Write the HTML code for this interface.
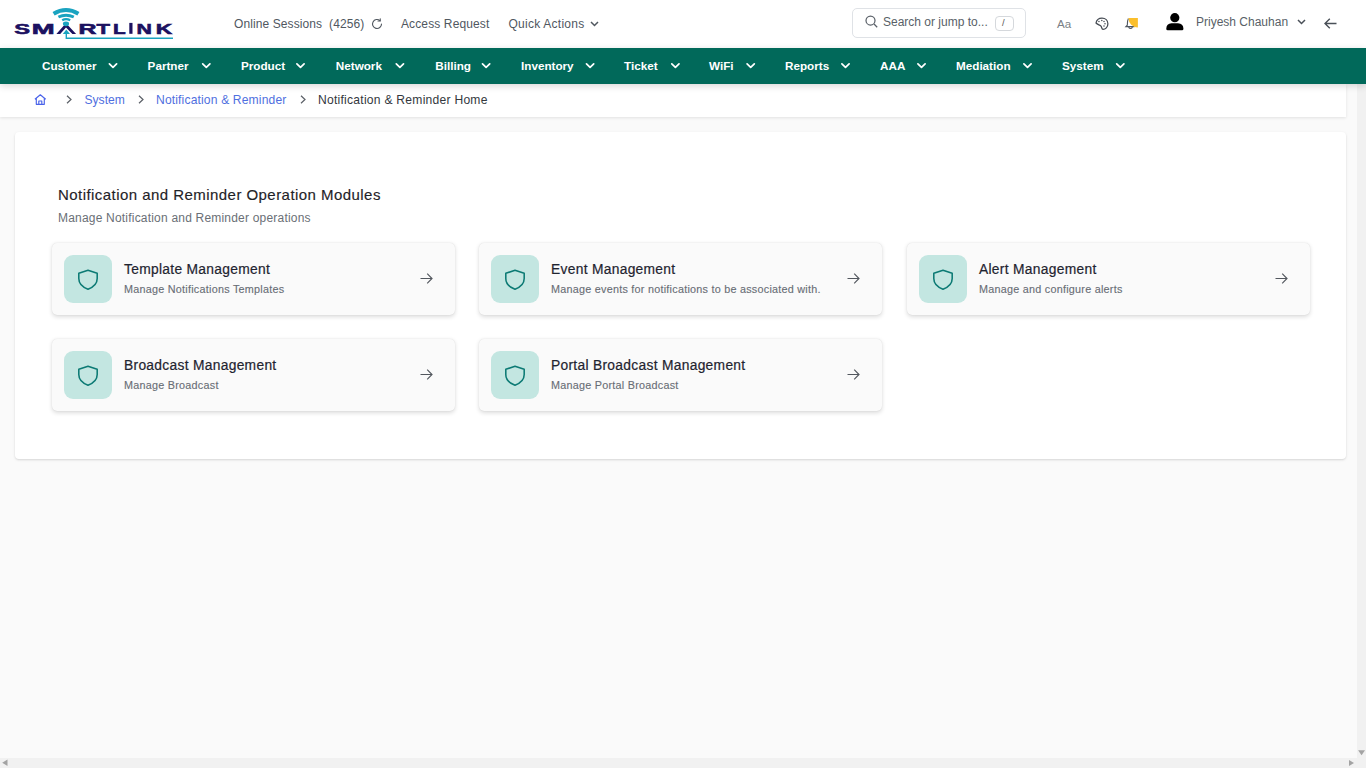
<!DOCTYPE html>
<html><head><meta charset="utf-8">
<style>
*{box-sizing:border-box;margin:0;padding:0}
html,body{width:1366px;height:768px;overflow:hidden;background:#fafafa;font-family:"Liberation Sans",sans-serif}
.a{position:absolute;white-space:nowrap;line-height:20px}
svg{position:absolute;overflow:visible}
#hdr{position:absolute;left:0;top:0;width:1366px;height:48px;background:#fff}
#nav{position:absolute;left:0;top:48px;width:1366px;height:36px;background:#01695a;box-shadow:0 2px 7px rgba(0,0,0,.16);z-index:3}
.hl{font-size:12px;color:#50575f;top:14px}
.nv{font-size:11.7px;font-weight:700;color:#fff;top:8px}
#bc{position:absolute;left:0;top:84px;width:1346px;height:33px;background:#fff;box-shadow:0 1px 3px rgba(0,0,0,.10)}
.bcl{font-size:12.1px;color:#4f6fe0;top:6px}
#panel{position:absolute;left:15px;top:132px;width:1331px;height:327px;background:#fff;border-radius:4px;box-shadow:0 1px 3px rgba(0,0,0,.10),0 1px 2px rgba(0,0,0,.06)}
.card{position:absolute;width:403px;height:72px;background:#fafafa;border-radius:5px;box-shadow:0 1.5px 4px rgba(0,0,0,.14),0 0 1px rgba(0,0,0,.12)}
.ib{position:absolute;left:12px;top:12px;width:48px;height:48px;border-radius:9px;background:#c3e6e1}
.ct{position:absolute;left:72px;top:17px;font-size:13.8px;color:#1f2430;letter-spacing:.3px;-webkit-text-stroke:.2px #1f2430}
.cs{position:absolute;left:72px;top:35.5px;font-size:10.8px;color:#686d75;letter-spacing:.25px;-webkit-text-stroke:.12px #686d75}
#vs{position:absolute;left:1357px;top:84px;width:9px;height:684px;background:#f1f1f1}
#hs{position:absolute;left:0;top:758px;width:1366px;height:10px;background:#f1f1f1}
</style></head><body>
<div id="hdr">
  <!-- logo -->
  <svg width="180" height="48" style="left:0;top:0">
    <g fill="#1c1160" stroke="#1c1160" stroke-width="0.6" font-family="Liberation Sans" font-weight="700" font-size="15.3">
      <text x="14.3" y="33.7" textLength="15.8" lengthAdjust="spacingAndGlyphs">S</text>
      <text x="31.7" y="33.7" textLength="22.9" lengthAdjust="spacingAndGlyphs">M</text>
      <text x="78.5" y="33.7" textLength="18" lengthAdjust="spacingAndGlyphs">R</text>
      <text x="96.5" y="33.7" textLength="13.5" lengthAdjust="spacingAndGlyphs">T</text>
      <text x="113" y="33.7" textLength="12.7" lengthAdjust="spacingAndGlyphs">L</text>
      <rect x="129.3" y="22.9" width="3.2" height="10.9" stroke="none"/>
      <text x="136.5" y="33.7" textLength="15.4" lengthAdjust="spacingAndGlyphs">N</text>
      <text x="155.7" y="33.7" textLength="16.5" lengthAdjust="spacingAndGlyphs">K</text>
    </g>
    <path d="M56.4 34 L64.3 25 L67.7 25 L76.1 34 L72.4 34 L66 27.6 L60.2 34 Z" fill="#1c1160"/>
    <ellipse cx="66" cy="23.8" rx="3.1" ry="2.4" fill="#1aa3c0"/>
    <path d="M62.8 33.9 L66.3 29.4 L70 33.9 Z" fill="#1aa3c0"/>
    <path d="M66.3 33 V38.2 H173" stroke="#1aa3c0" stroke-width="1.4" fill="none"/>
    <g stroke="#1aa3c0" fill="none" stroke-linecap="butt">
      <path d="M53.6 13.8 Q66 6.2 78.4 13.8" stroke-width="4"/>
      <path d="M58.4 17 Q66 13.4 73.8 17" stroke-width="3"/>
      <path d="M62.2 20.2 Q66 17.9 70.2 20.2" stroke-width="2.3"/>
    </g>
  </svg>
  <div class="a hl" style="left:234px;letter-spacing:.1px">Online Sessions&nbsp; (4256)</div>
  <svg width="12" height="12" style="left:371px;top:18px" viewBox="0 0 24 24" fill="none" stroke="#50575f" stroke-width="2.2" stroke-linecap="round"><path d="M21 12a9 9 0 1 1-3-6.7"/><path d="M18.5 1.5v4.5h-4.5"/></svg>
  <div class="a hl" style="left:401px;letter-spacing:.12px">Access Request</div>
  <div class="a hl" style="left:508.5px;letter-spacing:.25px">Quick Actions</div>
  <svg width="9" height="6" style="left:590px;top:21px" viewBox="0 0 9 6" fill="none" stroke="#50575f" stroke-width="1.5"><path d="M1 1l3.5 3.5L8 1"/></svg>

  <div style="position:absolute;left:852px;top:8px;width:174px;height:30px;border:1px solid #dfe2e6;border-radius:5px"></div>
  <svg width="13" height="13" style="left:864.5px;top:14.5px" viewBox="0 0 13 13" fill="none" stroke="#5a6068" stroke-width="1.25"><circle cx="5.5" cy="5.5" r="4.5"/><path d="M9 9l3.2 3.2"/></svg>
  <div class="a" style="left:883px;top:12px;font-size:12px;color:#595f67">Search or jump to...</div>
  <div style="position:absolute;left:994.5px;top:15.5px;width:19px;height:15px;border:1px solid #d5d8dc;border-radius:4px"></div>
  <div class="a" style="left:1002px;top:13px;font-size:9.5px;color:#555">/</div>

  <div class="a" style="left:1057px;top:14px;font-size:11.6px;color:#7a7f85">Aa</div>
  <svg width="14" height="14" style="left:1094.5px;top:17px" viewBox="0 0 14 14" fill="none" stroke="#454b53" stroke-width="1.25" stroke-linejoin="round"><path d="M1 6C1.6 2.8 4 1 7 1C10.4 1 12.9 3.4 12.9 6.8C12.9 10.2 10.4 12.4 8 12.4C6.6 12.4 6.9 10.4 6 9.2C5 7.9 2.6 7.8 1 6Z"/><g fill="#454b53" stroke="none"><circle cx="3.95" cy="4.5" r=".75"/><circle cx="6.8" cy="3.5" r=".75"/><circle cx="9" cy="4.5" r=".75"/><circle cx="10" cy="6.7" r=".75"/><circle cx="9" cy="9.1" r=".75"/></g></svg>
  <svg width="14" height="14" style="left:1125px;top:17px" viewBox="0 0 14 14"><path d="M3.4 1.6C2.6 3 2.3 5.5 2.3 8.2L0.9 9.6H9.5M3.6 10.3Q5.5 12.6 7.5 10.3" fill="none" stroke="#50575f" stroke-width="1.1"/><path d="M12.9 1H3.5A9.4 9.4 0 0 0 12.9 10.4Z" fill="#fbbf2c"/></svg>

  <svg width="18" height="18" style="left:1166px;top:13px" viewBox="0 0 18 18" fill="#000"><circle cx="8.8" cy="4.7" r="4.6"/><path d="M0.3 15.5 Q0.5 10.5 5.5 10.3 H12 Q17.2 10.5 17.4 15.5 V16 Q17.4 17.3 16 17.3 H1.7 Q0.3 17.3 0.3 16Z"/></svg>
  <div class="a" style="left:1196px;top:12px;font-size:12px;color:#595f67">Priyesh Chauhan</div>
  <svg width="9" height="6" style="left:1296.5px;top:19px" viewBox="0 0 9 6" fill="none" stroke="#4a5058" stroke-width="1.5"><path d="M1 1l3.5 3.5L8 1"/></svg>
  <svg width="13" height="11" style="left:1324px;top:18px" viewBox="0 0 13 11" fill="none" stroke="#4a5058" stroke-width="1.4"><path d="M12.5 5.5H1M5.8 0.7L1 5.5l4.8 4.8"/></svg>
</div>

<div id="nav">
  <div class="a nv" style="left:42px">Customer</div>
  <div class="a nv" style="left:147.6px">Partner</div>
  <div class="a nv" style="left:241px">Product</div>
  <div class="a nv" style="left:335.8px">Network</div>
  <div class="a nv" style="left:435.3px">Billing</div>
  <div class="a nv" style="left:521px">Inventory</div>
  <div class="a nv" style="left:624px">Ticket</div>
  <div class="a nv" style="left:709px">WiFi</div>
  <div class="a nv" style="left:785px">Reports</div>
  <div class="a nv" style="left:880px">AAA</div>
  <div class="a nv" style="left:956px">Mediation</div>
  <div class="a nv" style="left:1062px">System</div>
  <svg width="1366" height="36" style="left:0;top:0" fill="none" stroke="#fff" stroke-width="1.7" stroke-linecap="round" stroke-linejoin="round"><path transform="translate(0,0.6)" d="M109.4 15.2l3.6 3.6 3.6-3.6M202.7 15.2l3.6 3.6 3.6-3.6M296.9 15.2l3.6 3.6 3.6-3.6M396.3 15.2l3.6 3.6 3.6-3.6M482.5 15.2l3.6 3.6 3.6-3.6M586.5 15.2l3.6 3.6 3.6-3.6M671.8 15.2l3.6 3.6 3.6-3.6M747.1 15.2l3.6 3.6 3.6-3.6M841.9 15.2l3.6 3.6 3.6-3.6M917.9 15.2l3.6 3.6 3.6-3.6M1023.9 15.2l3.6 3.6 3.6-3.6M1116.7 15.2l3.6 3.6 3.6-3.6"/></svg>
</div>

<div id="bc">
  <svg width="13" height="12" style="left:34px;top:10px" viewBox="0 0 13 12" fill="none" stroke="#4a63ea" stroke-width="1.15" stroke-linejoin="round"><path d="M0.9 5.3L6.3 0.8 11.7 5.3M2.3 4.3V10.3H10.3V4.3M4.8 10.3V7H7.8V10.3"/></svg>
  <svg width="6" height="9" style="left:66px;top:11px" viewBox="0 0 6 9" fill="none" stroke="#5a5f66" stroke-width="1.2"><path d="M1 0.8l4 3.7-4 3.7"/></svg>
  <div class="a bcl" style="left:84.5px">System</div>
  <svg width="6" height="9" style="left:137.5px;top:11px" viewBox="0 0 6 9" fill="none" stroke="#5a5f66" stroke-width="1.2"><path d="M1 0.8l4 3.7-4 3.7"/></svg>
  <div class="a bcl" style="left:156px;letter-spacing:.15px">Notification &amp; Reminder</div>
  <svg width="6" height="9" style="left:299.5px;top:11px" viewBox="0 0 6 9" fill="none" stroke="#5a5f66" stroke-width="1.2"><path d="M1 0.8l4 3.7-4 3.7"/></svg>
  <div class="a bcl" style="left:318px;color:#33373d;letter-spacing:.25px">Notification &amp; Reminder Home</div>
</div>

<div id="panel">
  <div class="a" style="left:43px;top:53px;font-size:15px;color:#1f2328;letter-spacing:.45px;-webkit-text-stroke:.15px #1f2328">Notification and Reminder Operation Modules</div>
  <div class="a" style="left:43px;top:76px;font-size:12px;color:#6a6f76;letter-spacing:.2px">Manage Notification and Reminder operations</div>
</div>

<div class="card" style="left:52px;top:243px">
  <div class="ib"><svg width="22" height="22" style="left:12.5px;top:13.5px" viewBox="0 0 22 22" fill="none" stroke="#0c7a74" stroke-width="1.55" stroke-linejoin="round"><path d="M11 1.3L20.2 4.3V9.6C20.2 14.4 16.3 18.3 11 20.3 5.7 18.3 1.8 14.4 1.8 9.6V4.3Z"/></svg></div>
  <div class="a ct">Template Management</div>
  <div class="a cs">Manage Notifications Templates</div>
  <svg width="13" height="11" style="left:368px;top:30px" viewBox="0 0 13 11" fill="none" stroke="#52575e" stroke-width="1.15"><path d="M0.5 5.5H12M7.2 0.7L12 5.5 7.2 10.3"/></svg>
</div>
<div class="card" style="left:479px;top:243px">
  <div class="ib"><svg width="22" height="22" style="left:12.5px;top:13.5px" viewBox="0 0 22 22" fill="none" stroke="#0c7a74" stroke-width="1.55" stroke-linejoin="round"><path d="M11 1.3L20.2 4.3V9.6C20.2 14.4 16.3 18.3 11 20.3 5.7 18.3 1.8 14.4 1.8 9.6V4.3Z"/></svg></div>
  <div class="a ct">Event Management</div>
  <div class="a cs">Manage events for notifications to be associated with.</div>
  <svg width="13" height="11" style="left:368px;top:30px" viewBox="0 0 13 11" fill="none" stroke="#52575e" stroke-width="1.15"><path d="M0.5 5.5H12M7.2 0.7L12 5.5 7.2 10.3"/></svg>
</div>
<div class="card" style="left:907px;top:243px">
  <div class="ib"><svg width="22" height="22" style="left:12.5px;top:13.5px" viewBox="0 0 22 22" fill="none" stroke="#0c7a74" stroke-width="1.55" stroke-linejoin="round"><path d="M11 1.3L20.2 4.3V9.6C20.2 14.4 16.3 18.3 11 20.3 5.7 18.3 1.8 14.4 1.8 9.6V4.3Z"/></svg></div>
  <div class="a ct">Alert Management</div>
  <div class="a cs">Manage and configure alerts</div>
  <svg width="13" height="11" style="left:368px;top:30px" viewBox="0 0 13 11" fill="none" stroke="#52575e" stroke-width="1.15"><path d="M0.5 5.5H12M7.2 0.7L12 5.5 7.2 10.3"/></svg>
</div>
<div class="card" style="left:52px;top:339px">
  <div class="ib"><svg width="22" height="22" style="left:12.5px;top:13.5px" viewBox="0 0 22 22" fill="none" stroke="#0c7a74" stroke-width="1.55" stroke-linejoin="round"><path d="M11 1.3L20.2 4.3V9.6C20.2 14.4 16.3 18.3 11 20.3 5.7 18.3 1.8 14.4 1.8 9.6V4.3Z"/></svg></div>
  <div class="a ct">Broadcast Management</div>
  <div class="a cs">Manage Broadcast</div>
  <svg width="13" height="11" style="left:368px;top:30px" viewBox="0 0 13 11" fill="none" stroke="#52575e" stroke-width="1.15"><path d="M0.5 5.5H12M7.2 0.7L12 5.5 7.2 10.3"/></svg>
</div>
<div class="card" style="left:479px;top:339px">
  <div class="ib"><svg width="22" height="22" style="left:12.5px;top:13.5px" viewBox="0 0 22 22" fill="none" stroke="#0c7a74" stroke-width="1.55" stroke-linejoin="round"><path d="M11 1.3L20.2 4.3V9.6C20.2 14.4 16.3 18.3 11 20.3 5.7 18.3 1.8 14.4 1.8 9.6V4.3Z"/></svg></div>
  <div class="a ct">Portal Broadcast Management</div>
  <div class="a cs">Manage Portal Broadcast</div>
  <svg width="13" height="11" style="left:368px;top:30px" viewBox="0 0 13 11" fill="none" stroke="#52575e" stroke-width="1.15"><path d="M0.5 5.5H12M7.2 0.7L12 5.5 7.2 10.3"/></svg>
</div>

<div id="vs"></div>
<div id="hs"></div>
<svg width="1366" height="768" style="left:0;top:0" fill="#a3a3a3"><path d="M1358.1 750.3H1365L1361.55 755.3Z"/><path d="M1349 760V766L1354 763Z"/><path d="M7.5 759.4V766L2.2 762.7Z"/></svg>
</body></html>
